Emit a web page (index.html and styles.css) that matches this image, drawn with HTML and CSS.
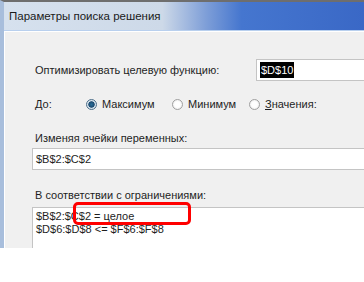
FILE: index.html
```html
<!DOCTYPE html>
<html lang="ru">
<head>
    <meta charset="UTF-8">
    <title>Параметры поиска решения</title>
    <link rel="stylesheet" href="styles.css">
</head>
<body>

    <div class="window">
        <div class="titlebar">Параметры поиска решения</div>

        <div class="panel">
            <div class="row target-row">
                <span class="label wide">Оптимизировать целевую функцию:</span>
                <div class="field short"><span class="selected">$D$10</span></div>
            </div>

            <div class="row radio-row">
                <span class="label to">До:</span>
                <label class="radio max"><span class="dot checked"></span>Максимум</label>
                <label class="radio min"><span class="dot"></span>Минимум</label>
                <label class="radio"><span class="dot"></span><u>З</u>начения:</label>
            </div>

            <div class="label section">Изменяя ячейки переменных:</div>
            <div class="field long">$B$2:$C$2</div>

            <div class="label section">В соответствии с ограничениями:</div>
            <div class="constraints">
                <div>$B$2:$C$2 = целое</div>
                <div>$D$6:$D$8 &lt;= $F$6:$F$8</div>
                <div class="highlight"></div>
            </div>
        </div>
    </div>

</body>
</html>
```

FILE: styles.css
```css
body {
    margin: 0;
    background: #fff;
    font-family: "Liberation Sans", Arial, sans-serif;
    font-size: 11px;
    color: #1e1e1e;
    overflow: hidden;
}
.window {
    height: 246px;
    border-top: 2px solid #6e6e6e;
    border-left: 4px solid #a8bedc;
    overflow: hidden;
    display: flex;
    flex-direction: column;
}
.titlebar {
    height: 28px;
    line-height: 28px;
    padding-left: 5px;
    font-size: 11.5px;
    color: #1a1a1a;
    background: linear-gradient(to right, #d6e1ee 0%, #cdd9e8 44%, #7f9fd8 56%, #4576cf 66%, #3a68c6 100%);
    border-bottom: 1px solid #b9d0ee;
}
.panel {
    flex: 1;
    background: #f0f0f0;
    border-top: 1px solid #fff;
    border-left: 1px solid #fff;
    padding: 27px 0 0 27px;
    position: relative;
}
.row {
    display: flex;
    align-items: center;
    white-space: nowrap;
}
.row > * {
    flex-shrink: 0;
}
.label {
    padding-left: 3px;
    white-space: nowrap;
}
.wide {
    width: 221px;
}
.field {
    height: 20px;
    line-height: 20px;
    background: #fff;
    border: 1px solid #c4c4c4;
    padding-left: 3px;
    white-space: nowrap;
}
.short {
    width: 140px;
}
.selected {
    background: #000;
    color: #fff;
    padding: 2px 1px;
}
.radio-row {
    margin-top: 14px;
    height: 18px;
}
.to {
    width: 51px;
}
.radio {
    display: flex;
    align-items: center;
}
.max {
    width: 86px;
}
.min {
    width: 77px;
}
.dot {
    width: 11px;
    height: 11px;
    border-radius: 50%;
    border: 1px solid #a0a0a0;
    background: radial-gradient(circle, #fff 40%, #e4e4e4 100%);
    margin-right: 5px;
    box-sizing: border-box;
}
.dot.checked {
    border-color: #4d6f8a;
    background: radial-gradient(circle, #2a6f9a 0%, #1c4a70 45%, #cfdde8 55%, #f2f6f9 100%);
}
.section {
    margin-top: 17px;
    line-height: 16px;
}
.long {
    width: 340px;
    margin-top: 2px;
}
.constraints {
    position: relative;
    margin-top: 4px;
    width: 340px;
    height: 60px;
    background: #fff;
    border: 1px solid #c4c4c4;
    padding: 2px 3px;
    line-height: 13px;
}
.highlight {
    position: absolute;
    left: 40px;
    top: -6px;
    width: 112px;
    height: 17px;
    border: 3px solid #f00;
    border-radius: 5px;
}
```
